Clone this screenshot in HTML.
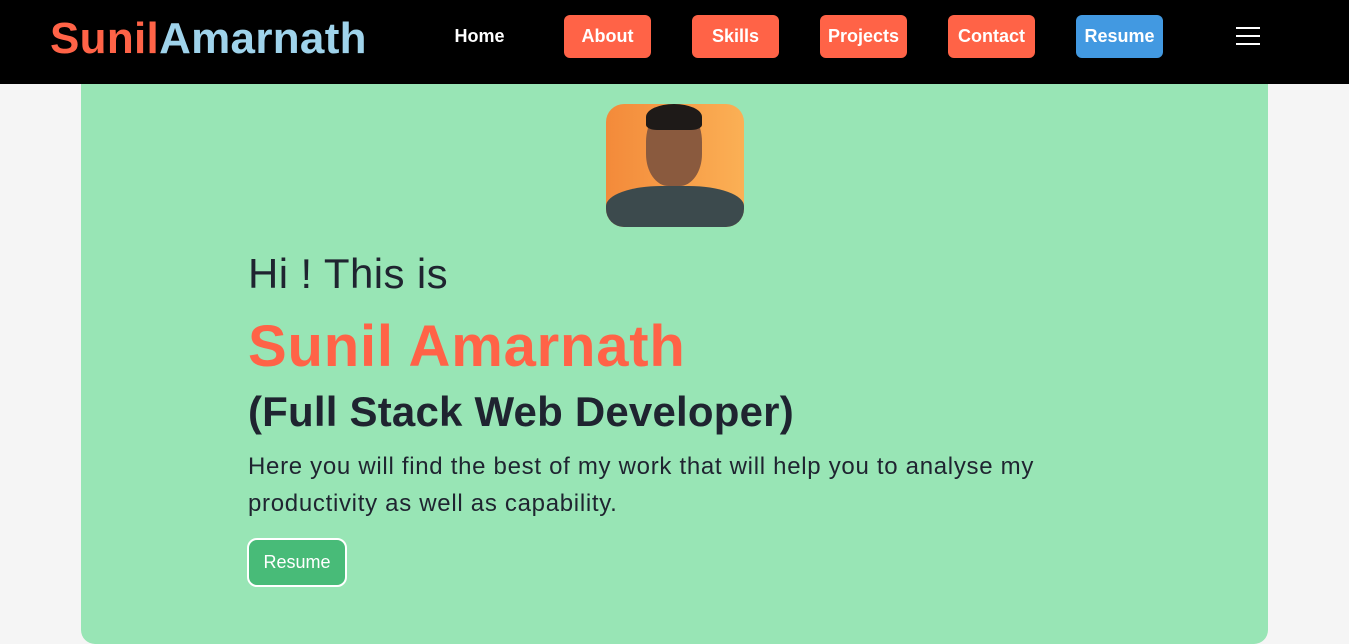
<!DOCTYPE html>
<html><head><style>
*{margin:0;padding:0;box-sizing:border-box}
body{width:1349px;height:644px;background:#f5f5f5;font-family:"Liberation Sans",sans-serif;overflow:hidden;position:relative}
nav{position:absolute;left:0;top:0;width:1349px;height:84px;background:#000}
.logo{position:absolute;left:50px;top:14px;font-size:44px;font-weight:bold;letter-spacing:0.3px}
.logo .a{color:#ff6347}.logo .b{color:#9fd3eb}
.btn{position:absolute;top:15px;height:43px;width:87px;border-radius:6px;background:#ff6347;color:#fff;font-weight:bold;font-size:18px;text-align:center;line-height:43px}
.ham{position:absolute;left:1236px;width:24px;height:2px;background:#fff}
.card{position:absolute;left:81px;top:84px;width:1187px;height:560px;background:#98e5b5;border-radius:0 0 14px 14px}
.photo{position:absolute;left:606px;top:104px;width:138px;height:123px;border-radius:18px;overflow:hidden;background:linear-gradient(90deg,#f38a3a,#fbb055)}
.t{position:absolute;left:248px;color:#1f2430;white-space:nowrap}
</style></head><body>
<nav>
<div class="logo"><span class="a">Sunil</span><span class="b">Amarnath</span></div>
<div class="btn" style="left:436px;background:none">Home</div>
<div class="btn" style="left:564px">About</div>
<div class="btn" style="left:692px">Skills</div>
<div class="btn" style="left:820px">Projects</div>
<div class="btn" style="left:948px">Contact</div>
<div class="btn" style="left:1076px;background:#4299e1">Resume</div>
<div class="ham" style="top:27px"></div><div class="ham" style="top:35px"></div><div class="ham" style="top:43px"></div>
</nav>
<div class="card"></div>
<div class="photo">
<div style="position:absolute;left:40px;top:2px;width:56px;height:80px;border-radius:45% 45% 40% 40%;background:#8a5a3e"></div>
<div style="position:absolute;left:40px;top:0px;width:56px;height:26px;border-radius:50% 50% 20% 20%;background:#1e1a18"></div>
<div style="position:absolute;left:0;top:82px;width:138px;height:50px;border-radius:40% 40% 0 0;background:#3c4a4d"></div>
</div>
<div class="t" style="top:250px;font-size:42px;letter-spacing:0.4px">Hi ! This is</div>
<div class="t" style="top:313px;font-size:58px;font-weight:bold;color:#ff6347;letter-spacing:0.8px">Sunil Amarnath</div>
<div class="t" style="top:388px;font-size:42px;font-weight:bold;color:#1f2430;letter-spacing:0.2px">(Full Stack Web Developer)</div>
<div class="t" style="top:448px;font-size:24px;line-height:37px;letter-spacing:0.7px">Here you will find the best of my work that will help you to analyse my<br>productivity as well as capability.</div>
<div style="position:absolute;left:247px;top:538px;width:100px;height:49px;border:2px solid #fff;border-radius:10px;background:#48bb78;color:#fff;font-size:18px;text-align:center;line-height:45px">Resume</div>
</body></html>
